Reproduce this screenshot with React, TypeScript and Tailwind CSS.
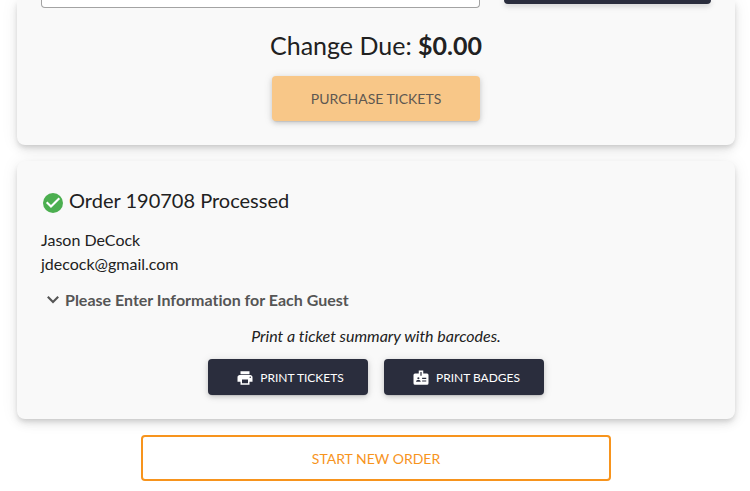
import type { ReactNode } from "react";
import { MdPrint } from "react-icons/md";

const buttonShadow =
  "shadow-[0_3px_1px_-2px_rgba(0,0,0,0.08),0_2px_5px_rgba(0,0,0,0.14),0_1px_10px_rgba(0,0,0,0.1)]";

function CheckCircle({ className = "" }: { className?: string }) {
  return (
    <svg viewBox="0 0 24 24" className={className} aria-hidden="true">
      <circle cx="12" cy="12" r="10" fill="#4caf50" />
      <path d="M5.7 11.3 10 15.6 18.3 7.3" fill="none" stroke="#fff" strokeWidth="2.1" />
    </svg>
  );
}

function ChevronDown({ className = "" }: { className?: string }) {
  return (
    <svg viewBox="0 0 24 24" className={className} aria-hidden="true">
      <path d="M6.8 8.8 12 14l5.2-5.2" fill="none" stroke="currentColor" strokeWidth="2.1" />
    </svg>
  );
}

function Badge({ className = "" }: { className?: string }) {
  return (
    <svg viewBox="0 0 24 24" className={className} fill="currentColor" aria-hidden="true">
      <path
        fillRule="evenodd"
        d="M9 2h6v4h5a2 2 0 0 1 2 2v11a2 2 0 0 1-2 2H4a2 2 0 0 1-2-2V8a2 2 0 0 1 2-2h5V2Zm2.2 2v5h1.6V4h-1.6ZM8.5 11a1.4 1.4 0 1 0 0 2.8 1.4 1.4 0 0 0 0-2.8ZM5.5 17h6v-.8c0-1-1.8-1.6-3-1.6s-3 .6-3 1.6v.8Zm8-5.2v1.4H19v-1.4h-5.5Zm0 3.4v1.4H19v-1.4h-5.5Z"
      />
    </svg>
  );
}

function Card({ className = "", children }: { className?: string; children: ReactNode }) {
  return (
    <section
      className={`bg-[#f9f9f9] px-6 pb-6 shadow-[0_3px_5px_-1px_rgba(0,0,0,0.12),0_5px_8px_rgba(0,0,0,0.08),0_1px_18px_rgba(0,0,0,0.07)] ${className}`}
    >
      {children}
    </section>
  );
}

function PrintButton({ icon, children }: { icon: ReactNode; children: ReactNode }) {
  return (
    <button
      type="button"
      className={`flex h-9 w-40 items-center justify-center gap-1.5 rounded bg-[#2a2d3d] pt-0.5 pl-1 text-xs text-white uppercase ${buttonShadow}`}
    >
      {icon}
      {children}
    </button>
  );
}

export default function App() {
  return (
    <main className="bg-white pr-[15px] pb-2.5 pl-[17px] font-['Lato',sans-serif] text-base text-[#212121] [font-variant-ligatures:none]">
      <Card className="rounded-b-lg">
        <div className="flex items-start gap-6">
          <input
            aria-label="Amount received"
            className="h-2 min-w-0 flex-1 rounded-b border border-t-0 border-[#a3a3a3] bg-white"
          />
          <button
            type="button"
            aria-label="Apply"
            className={`h-1 w-[207px] rounded-b bg-[#2a2d3d] ${buttonShadow}`}
          />
        </div>
        <div className="mt-[19px] text-center text-[25px] leading-9">
          Change Due: <strong>$0.00</strong>
        </div>
        <button
          type="button"
          disabled
          className={`mx-auto mt-[13px] block h-[45px] w-52 rounded bg-[#f8c788] text-sm text-[#5e5851] uppercase ${buttonShadow}`}
        >
          Purchase Tickets
        </button>
      </Card>

      <Card className="mt-4 rounded-lg pt-6">
        <h2 className="flex items-center gap-1 text-xl leading-[30px]">
          <CheckCircle className="mt-1.5 size-6" />
          Order 190708 Processed
        </h2>
        <div className="mt-[13px] leading-6">
          <p>Jason DeCock</p>
          <p>jdecock@gmail.com</p>
        </div>
        <button
          type="button"
          className="mt-3 flex items-center leading-6 font-bold text-[#555]"
        >
          <ChevronDown className="size-6" />
          Please Enter Information for Each Guest
        </button>
        <p className="mt-3 text-center leading-6 italic">
          Print a ticket summary with barcodes.
        </p>
        <div className="mt-[11px] flex justify-center gap-4">
          <PrintButton icon={<MdPrint className="size-[18px]" />}>Print Tickets</PrintButton>
          <PrintButton icon={<Badge className="size-[18px]" />}>Print Badges</PrintButton>
        </div>
      </Card>

      <button
        type="button"
        className="mx-auto mt-4 block h-[46px] w-full max-w-[470px] rounded border-2 border-[#f7941d] bg-white pt-0.5 text-sm text-[#f7941d] uppercase"
      >
        Start New Order
      </button>
    </main>
  );
}
